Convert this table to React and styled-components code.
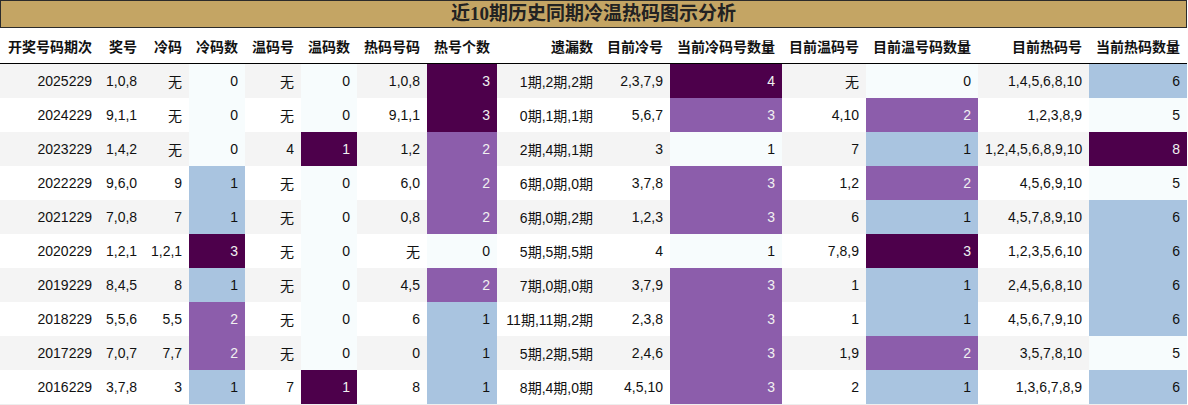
import React from "react";
import styled, { createGlobalStyle } from "styled-components";

const GlobalStyle = createGlobalStyle`
  html, body { margin: 0; padding: 0; background: #ffffff; }
  body { font-family: "Liberation Sans", "Noto Sans CJK SC", sans-serif; }
`;

const Wrap = styled.div`
  width: 1187px;
  display: flex;
  flex-direction: column;
`;

const TitleBar = styled.div`
  height: 26px;
  border: 1px solid #2b2b2b;
  background: #c4a564;
  color: #222222;
  font-family: "Liberation Serif", "Noto Sans CJK SC", serif;
  font-weight: bold;
  font-size: 19px;
  line-height: 26px;
  text-align: center;
`;

const Table = styled.table`
  width: 1187px;
  border-collapse: collapse;
  table-layout: fixed;
  font-size: 14px;
  color: #111111;
  border-bottom: 1px solid #eeeeee;
`;

const HeadCell = styled.th`
  height: 35px;
  padding: 0 7px;
  font-weight: bold;
  text-align: right;
  white-space: nowrap;
  border-bottom: 1px solid #000000;
  color: #111111;
`;

const Row = styled.tr`
  background: ${(p) => (p.$alt ? "#f4f4f4" : "#ffffff")};
`;

const SHADES = {
  dark: { bg: "#4d004b", fg: "#f1f1f1" },
  purple: { bg: "#8c5dab", fg: "#f1f1f1" },
  blue: { bg: "#a9c4e0", fg: "#111111" },
  light: { bg: "#f7fcfd", fg: "#111111" },
};

const Cell = styled.td`
  height: 34px;
  padding: 0 7px;
  text-align: right;
  white-space: nowrap;
  background: ${(p) => (p.$shade ? SHADES[p.$shade].bg : "transparent")};
  color: ${(p) => (p.$shade ? SHADES[p.$shade].fg : "#111111")};
`;

const widths = [99, 45, 45, 56, 56, 56, 70, 70, 103, 70, 112, 84, 112, 111, 98];

const headers = [
  "开奖号码期次", "奖号", "冷码", "冷码数", "温码号", "温码数", "热码号码", "热号个数",
  "遗漏数", "目前冷号", "当前冷码号数量", "目前温码号", "目前温号码数量", "目前热码号", "当前热码数量",
];

const rows = [
  ["2025229", "1,0,8", "无", 0, "无", 0, "1,0,8", 3, "1期,2期,2期", "2,3,7,9", 4, "无", 0, "1,4,5,6,8,10", 6],
  ["2024229", "9,1,1", "无", 0, "无", 0, "9,1,1", 3, "0期,1期,1期", "5,6,7", 3, "4,10", 2, "1,2,3,8,9", 5],
  ["2023229", "1,4,2", "无", 0, "4", 1, "1,2", 2, "2期,4期,1期", "3", 1, "7", 1, "1,2,4,5,6,8,9,10", 8],
  ["2022229", "9,6,0", "9", 1, "无", 0, "6,0", 2, "6期,0期,0期", "3,7,8", 3, "1,2", 2, "4,5,6,9,10", 5],
  ["2021229", "7,0,8", "7", 1, "无", 0, "0,8", 2, "6期,0期,2期", "1,2,3", 3, "6", 1, "4,5,7,8,9,10", 6],
  ["2020229", "1,2,1", "1,2,1", 3, "无", 0, "无", 0, "5期,5期,5期", "4", 1, "7,8,9", 3, "1,2,3,5,6,10", 6],
  ["2019229", "8,4,5", "8", 1, "无", 0, "4,5", 2, "7期,0期,0期", "3,7,9", 3, "1", 1, "2,4,5,6,8,10", 6],
  ["2018229", "5,5,6", "5,5", 2, "无", 0, "6", 1, "11期,11期,2期", "2,3,8", 3, "1", 1, "4,5,6,7,9,10", 6],
  ["2017229", "7,0,7", "7,7", 2, "无", 0, "0", 1, "5期,2期,5期", "2,4,6", 3, "1,9", 2, "3,5,7,8,10", 5],
  ["2016229", "3,7,8", "3", 1, "7", 1, "8", 1, "8期,4期,0期", "4,5,10", 3, "2", 1, "1,3,6,7,8,9", 6],
];

// per gradient column: value -> shade
const shadeMaps = {
  3: { 0: "light", 1: "blue", 2: "purple", 3: "dark" },
  5: { 0: "light", 1: "dark" },
  7: { 0: "light", 1: "blue", 2: "purple", 3: "dark" },
  10: { 1: "light", 3: "purple", 4: "dark" },
  12: { 0: "light", 1: "blue", 2: "purple", 3: "dark" },
  14: { 5: "light", 6: "blue", 8: "dark" },
};

export default function App() {
  return (
    <>
      <GlobalStyle />
      <Wrap>
        <TitleBar>近10期历史同期冷温热码图示分析</TitleBar>
        <Table>
          <colgroup>
            {widths.map((w, i) => (
              <col key={i} style={{ width: w }} />
            ))}
          </colgroup>
          <thead>
            <tr>
              {headers.map((h) => (
                <HeadCell key={h}>{h}</HeadCell>
              ))}
            </tr>
          </thead>
          <tbody>
            {rows.map((r, ri) => (
              <Row key={ri} $alt={ri % 2 === 0}>
                {r.map((v, ci) => (
                  <Cell key={ci} $shade={shadeMaps[ci] ? shadeMaps[ci][v] : undefined}>
                    {v}
                  </Cell>
                ))}
              </Row>
            ))}
          </tbody>
        </Table>
      </Wrap>
    </>
  );
}
